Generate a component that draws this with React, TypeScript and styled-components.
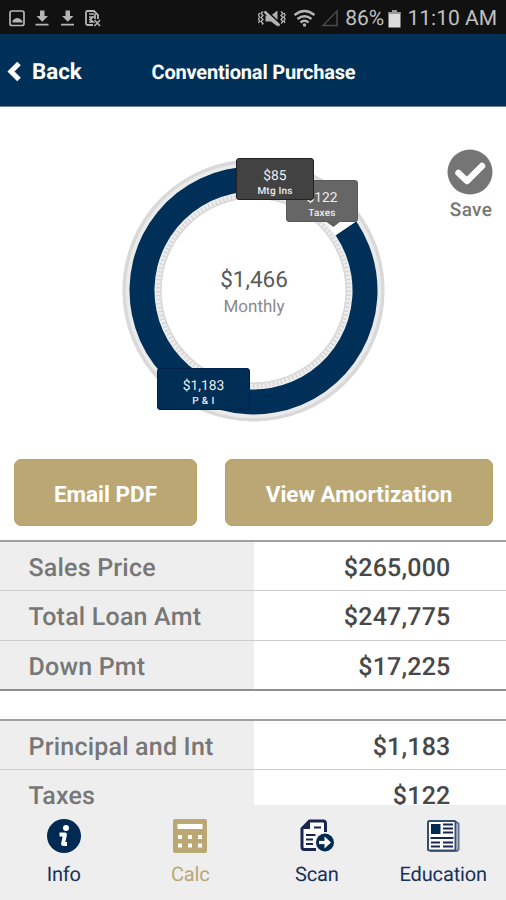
import React from "react";
import styled, { createGlobalStyle } from "styled-components";

const navy = "#003057";
const gold = "#bba774";

const GlobalStyle = createGlobalStyle`
  * { box-sizing: border-box; }
  body {
    margin: 0;
    background: #fff;
    font-family: Roboto, "Liberation Sans", sans-serif;
    text-rendering: geometricPrecision;
  }
`;

const Screen = styled.div`
  width: 506px;
  height: 900px;
  display: flex;
  flex-direction: column;
  overflow: hidden;
  background: #fff;
`;

const StatusBar = styled.div`
  height: 34px;
  flex: none;
  display: flex;
  align-items: center;
  justify-content: space-between;
  padding: 3px 9px 0 9px;
  background: #111;
  color: #c0c0c0;
  font-size: 21px;
  line-height: 31px;
  white-space: nowrap;
`;

const StatusGroup = styled.div`
  display: flex;
  align-items: center;
`;

const BatteryLevel = styled.span`
  margin: 1px 4px 0 5px;
  letter-spacing: -0.1px;
`;

const Clock = styled.span`
  margin: 1px 0 0 6.5px;
`;

const Header = styled.header`
  height: 73px;
  flex: none;
  display: grid;
  grid-template-columns: 151.5px 1fr;
  align-items: center;
  padding-top: 3px;
  background: ${navy};
  border-bottom: 1px solid #6d839c;
  color: #fff;
  font-weight: 700;
`;

const BackButton = styled.div`
  display: flex;
  align-items: center;
  padding: 1px 0 0 7px;
  gap: 10px;
  font-size: 22.3px;
`;

const Title = styled.h1`
  margin: 0;
  font-size: 20px;
  letter-spacing: -0.18px;
  white-space: nowrap;
`;

const ChartArea = styled.section`
  height: 352px;
  flex: none;
  position: relative;
  display: flex;
  justify-content: center;
`;

const Donut = styled.svg`
  display: block;
  width: 270px;
  height: 270px;
  margin-top: 48px;
`;

const Total = styled.div`
  position: absolute;
  top: 159px;
  left: 0;
  width: 508px;
  text-align: center;
`;

const Amount = styled.div`
  color: #5a5a5a;
  font-size: 22.5px;
  line-height: 29px;
`;

const Period = styled.div`
  color: #8a8a8a;
  font-size: 17px;
  line-height: 24px;
`;

const Callout = styled.div<{ $x: number; $y: number; $w: number; $bg: string; $edge: string }>`
  position: absolute;
  left: ${(p) => p.$x}px;
  top: ${(p) => p.$y}px;
  width: ${(p) => p.$w}px;
  height: 42px;
  padding-top: 9px;
  border: 1px solid ${(p) => p.$edge};
  border-radius: 3px;
  background: ${(p) => p.$bg};
  color: #eee;
  text-align: center;
`;

const CalloutValue = styled.div`
  font-size: 13.8px;
  line-height: 16px;
`;

const CalloutLabel = styled.div<{ $spacing?: number }>`
  font-size: 10px;
  font-weight: 500;
  line-height: 15px;
  letter-spacing: ${(p) => p.$spacing ?? 0.2}px;
`;

const Pointer = styled.svg`
  position: absolute;
  left: 38px;
  top: 40px;
`;

const SaveButton = styled.div`
  position: absolute;
  top: 42px;
  left: 446px;
  width: 50px;
  display: flex;
  flex-direction: column;
  align-items: center;
  gap: 3px;
  color: #777;
  font-size: 19px;
  font-weight: 500;
  line-height: 24px;
  letter-spacing: 0.3px;
`;

const SaveIcon = styled.svg`
  flex: none;
  margin-left: -3px;
`;

const Actions = styled.div`
  height: 81px;
  flex: none;
  display: grid;
  grid-template-columns: 183px 268px;
  gap: 28px;
  padding-left: 14px;
  align-items: start;
`;

const ActionButton = styled.button`
  height: 67px;
  padding: 3px 0 0;
  border: 1px solid #b9a163;
  border-radius: 7px;
  background: ${gold};
  color: #fff;
  font: 700 22.5px Roboto, sans-serif;
  white-space: nowrap;
`;

const Tables = styled.main`
  height: 265px;
  flex: none;
  display: flex;
  flex-direction: column;
  gap: 28px;
  overflow: hidden;
`;

const Table = styled.div`
  flex: none;
  border-top: 2px solid #a0a0a0;
  border-bottom: 2px solid #8f8f8f;
`;

const Row = styled.div`
  height: 48px;
  display: grid;
  grid-template-columns: 253.5px 1fr;
  color: #777;
  font-size: 25px;
  font-weight: 500;
  line-height: 40px;
  letter-spacing: 0.2px;
  & > * {
    padding-top: 7px;
  }
  & + & {
    height: 49.5px;
    border-top: 1px solid #ccc;
  }
`;

const RowLabel = styled.div`
  padding-left: 28.5px;
  background: #eee;
`;

const RowValue = styled.div`
  padding-right: 55.5px;
  color: #484848;
  text-align: right;
`;

const TabBar = styled.nav`
  height: 95px;
  flex: none;
  display: grid;
  grid-template-columns: repeat(4, 126.5px);
  background: #eee;
`;

const Tab = styled.div<{ $active?: boolean }>`
  display: flex;
  flex-direction: column;
  align-items: center;
  padding: 13px 0 0 1px;
  gap: 7px;
  color: ${(p) => (p.$active ? gold : "#18305c")};
  font-size: 20px;
  line-height: 26px;
  letter-spacing: -0.15px;
`;

const TabIcon = styled.svg`
  display: block;
  flex: none;
  width: 36px;
  height: 36px;
`;

const summary = [
  ["Sales Price", "$265,000"],
  ["Total Loan Amt", "$247,775"],
  ["Down Pmt", "$17,225"],
];

const payment = [
  ["Principal and Int", "$1,183"],
  ["Taxes", "$122"],
];

function Rows({ data }: { data: string[][] }) {
  return (
    <Table>
      {data.map(([label, value]) => (
        <Row key={label}>
          <RowLabel>{label}</RowLabel>
          <RowValue>{value}</RowValue>
        </Row>
      ))}
    </Table>
  );
}

function Notifications() {
  return (
    <svg width="94" height="20" viewBox="0 0 94 20" fill="none" stroke="#b5b5b5">
      <rect x="1" y="2" width="14" height="14.500" rx="2" strokeWidth="1.700" />
      <path d="M3.500 13.500v-2l2-1.500 2-1 3 .5 3 2.500v1.500z" fill="#b5b5b5" stroke="none" />
      <g fill="#b5b5b5" stroke="none">
        <path d="M31 1.500h4.500v5.500h3.500l-5.700 5.800L27.500 7H31zM26.500 14.800h13v1.700h-13z" />
        <path d="M56.500 1.500H61v5.500h3.500l-5.700 5.800L53 7h3.500zM52 14.800h13v1.700H52z" />
      </g>
      <path d="M84 16h-5.500a1.500 1.500 0 0 1-1.500-1.500v-11A1.500 1.500 0 0 1 78.500 2H85l4 4v4" strokeWidth="1.800" />
      <path d="M80 5h5M80 8h4l-3 2.500 3 2.500h-4M86 5v5" strokeWidth="1.700" />
      <path d="M85.500 11l5.500 6M91 11l-5.500 6" strokeWidth="1.500" />
    </svg>
  );
}

function Signals() {
  return (
    <svg width="82" height="20" viewBox="258 8 82 20" fill="none" stroke="#b5b5b5">
      <path d="M265.500 14.500h5.500l6.500-5v16l-6.500-5h-5.500z" fill="#b0b0b0" stroke="none" />
      <path d="M266.500 10l15 14" stroke="#111" strokeWidth="2" />
      <path d="M264.500 10.500l15 14" strokeWidth="2.400" />
      <path d="M263 10.500l-2 2 2 2-2 2 2 2-2 2 2 2-1 1M259.500 12l-1 2 1 2-1 2 1 2-1 2M281 10.500l2 2-2 2 2 2-2 2 2 2-2 2M284 12l1 2-1 2 1 2-1 2 1 2" strokeWidth="1.300" />
      <path d="M294.500 14q10-8 20 0M297.500 18q7-5.500 14 0M300.500 21.500q4-3.500 8 0" strokeWidth="2.400" />
      <circle cx="304.500" cy="24" r="1.700" fill="#b5b5b5" stroke="none" />
      <path d="M323 24.500h14V10z" stroke="#4b4b4b" strokeWidth="1.500" />
    </svg>
  );
}

export default function App() {
  return (
    <Screen>
      <GlobalStyle />
      <StatusBar>
        <Notifications />
        <StatusGroup>
          <Signals />
          <BatteryLevel>86%</BatteryLevel>
          <svg width="13" height="18" viewBox="0 0 13 18">
            <path d="M4 0h5v2h3.500v15.500H.5V2H4z" fill="#ddd" />
            <path d="M4 0h5v2h3.500v2H.5V2H4z" fill="#999" />
          </svg>
          <Clock>11:10 AM</Clock>
        </StatusGroup>
      </StatusBar>

      <Header>
        <BackButton>
          <svg width="15" height="22" viewBox="0 0 15 22">
            <path d="M12 2.500 4 10.500l8 8" fill="none" stroke="#fff" strokeWidth="5" />
          </svg>
          Back
        </BackButton>
        <Title>Conventional Purchase</Title>
      </Header>

      <ChartArea>
        <Donut viewBox="118 155 270 270" fill="none">
          <circle cx="253.500" cy="290.500" r="127" stroke="#ebebeb" strokeWidth="8" />
          <circle cx="253.500" cy="290.500" r="129.300" stroke="#d9d9d9" strokeWidth="3.400" />
          <circle cx="253.500" cy="290.500" r="95.500" stroke="#ededed" strokeWidth="7" />
          <circle cx="253.500" cy="290.500" r="95" stroke="#d6d6d6" strokeWidth="5" strokeDasharray="1.500 2.500" />
          <circle cx="253.500" cy="290.500" r="92.700" stroke="#d8d8d8" strokeWidth="1.400" />
          <path d="M356.300 221.160A124 124 0 1 1 253.500 166.500V191.500A99 99 0 1 0 335.570 235.140Z" fill={navy} />
          <path d="M253.500 166.500A124 124 0 0 1 356.300 221.160L335.570 235.140A99 99 0 0 0 253.500 191.500Z" fill="#fff" />
        </Donut>
        <Total>
          <Amount>$1,466</Amount>
          <Period>Monthly</Period>
        </Total>
        <Callout $x={286} $y={73} $w={72} $bg="#666" $edge="#5a5a5a">
          <CalloutValue>$122</CalloutValue>
          <CalloutLabel>Taxes</CalloutLabel>
          <Pointer width="16" height="8" viewBox="0 0 16 8">
            <path d="M0 0h16L8.500 6z" fill="#606060" />
          </Pointer>
        </Callout>
        <Callout $x={236} $y={51} $w={78} $bg="#424242" $edge="#222">
          <CalloutValue>$85</CalloutValue>
          <CalloutLabel>Mtg Ins</CalloutLabel>
        </Callout>
        <Callout $x={157} $y={261} $w={93} $bg="#002e55" $edge="#00204b">
          <CalloutValue>$1,183</CalloutValue>
          <CalloutLabel $spacing={0.4}>P &amp; I</CalloutLabel>
        </Callout>
        <SaveButton>
          <SaveIcon width="46" height="46" viewBox="0 0 46 46">
            <circle cx="23" cy="23" r="22.500" fill="#757575" />
            <path d="M11.500 24l8.500 8L35 17" fill="none" stroke="#fff" strokeWidth="6.500" strokeLinejoin="round" strokeLinecap="round" />
          </SaveIcon>
          Save
        </SaveButton>
      </ChartArea>

      <Actions>
        <ActionButton>Email PDF</ActionButton>
        <ActionButton>View Amortization</ActionButton>
      </Actions>

      <Tables>
        <Rows data={summary} />
        <Rows data={payment} />
      </Tables>

      <TabBar>
        <Tab>
          <TabIcon viewBox="0 0 36 36">
            <circle cx="18" cy="18" r="17" fill="#002a52" />
            <circle cx="20" cy="10" r="3" fill="#fff" />
            <path d="M13.500 16.500h5.500L17 26h4" fill="none" stroke="#fff" strokeWidth="3.800" strokeLinejoin="round" />
          </TabIcon>
          Info
        </Tab>
        <Tab $active>
          <TabIcon viewBox="0 0 36 36">
            <rect x="1" y="1" width="34" height="34" rx="2" fill={gold} />
            <path d="M5.500 6h25v5h-25zM6 17h4v4H6zM16 17h4v4h-4zM26 17h4v4h-4zM6 25.500h4v4H6zM16 25.500h4v4h-4zM26 25.500h4v4h-4z" fill="#fff" />
          </TabIcon>
          Calc
        </Tab>
        <Tab>
          <TabIcon viewBox="0 0 36 36" fill="none" stroke="#18254f">
            <path d="M17 31.500H5.500a2.500 2.500 0 0 1-2.500-2.500V10.500L10.500 3H24a2.500 2.500 0 0 1 2.500 2.500V14" fill="#fff" strokeWidth="3" />
            <path d="M3 11l8-8v8z" fill="#18254f" stroke="none" />
            <path d="M15 9.500h7M7 17h9.500M7 21.500h7M7 26h7" strokeWidth="2" />
            <circle cx="26" cy="24.500" r="10.500" fill="#eee" stroke="none" />
            <circle cx="26" cy="24.500" r="9" fill="#002a52" stroke="none" />
            <path d="M20 24.500h7" stroke="#fff" strokeWidth="3.200" />
            <path d="M25.500 18.500l6.500 6-6.500 6z" fill="#fff" stroke="none" />
          </TabIcon>
          Scan
        </Tab>
        <Tab>
          <TabIcon viewBox="0 0 36 36" fill="none" stroke="#18254f">
            <path d="M29.500 3l4 2.500v26L32 33H5" stroke="#5f7390" strokeWidth="2" />
            <rect x="3" y="3" width="27.500" height="29.500" rx="1.500" fill="#fff" stroke="#364d72" strokeWidth="2" />
            <path d="M6 6h9.500v10H6z" fill="#002a52" stroke="none" />
            <path d="M18 6.500h10M18 10.500h10M18 14.500h10M5.500 20h23" strokeWidth="2" />
            <path d="M6 24.500h9M18 24.500h10M6 28.500h9M18 28.500h10" strokeWidth="1.800" />
          </TabIcon>
          Education
        </Tab>
      </TabBar>
    </Screen>
  );
}
